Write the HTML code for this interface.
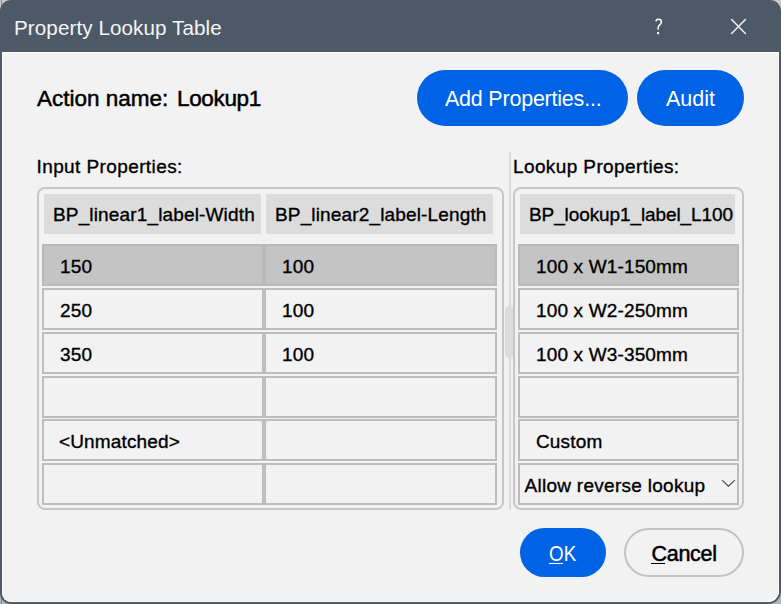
<!DOCTYPE html>
<html><head><meta charset="utf-8">
<style>
*{margin:0;padding:0;box-sizing:border-box}
html,body{width:781px;height:604px;overflow:hidden;background:linear-gradient(#cacaca,#b4b4b4);font-family:"Liberation Sans",sans-serif;color:#000}
.a{position:absolute;white-space:nowrap;line-height:1}
#win{position:absolute;left:0;top:0;width:781px;height:604px;background:#4e5968;border-radius:11px 11px 13px 11px;overflow:hidden}
#body{position:absolute;left:2px;top:52px;width:777px;height:550px;background:#f2f2f2;border-radius:0 0 11px 9px;box-shadow:inset 1px 1px 0 #fbfbfb,inset -1px -1px 0 #fbfbfb}
.t{font-size:19px;letter-spacing:0.15px;-webkit-text-stroke:0.35px #000}
.frame{position:absolute;border:2px solid #c6c6c6;border-radius:8px}
.hdr{position:absolute;background:#dcdcdc;height:40px}
.cell{position:absolute;height:42px;border:2px solid #bdbdbd;background:#f2f2f2}
.sel{background:#c4c4c4;border-color:#bababa}
.s{-webkit-text-stroke:0.5px #000}
.btn{position:absolute;background:#0063e5;border-radius:28px;color:#fff}
</style></head><body>
<div class="a" style="left:1px;top:0;width:1px;height:604px;background:#8a8a8a"></div>
<div id="win">
  <div class="a" style="left:14px;top:18px;font-size:20.6px;letter-spacing:0.1px;color:#f4f5f7">Property Lookup Table</div>
  <svg class="a" style="left:0;top:0" width="781" height="60"><path d="M655.6 21.3C656.2 19.9 657.3 19.3 658.5 19.3C660.2 19.3 661.4 20.4 661.4 21.9C661.4 23.6 660.2 24.4 659.2 25.4C658.4 26.2 658.1 26.9 658.1 28L658.1 29.8" stroke="#fff" stroke-width="1.5" fill="none"/><rect x="657.1" y="32" width="2" height="2.2" fill="#fff"/></svg>
  <svg class="a" style="left:730px;top:18px" width="17" height="17" viewBox="0 0 17 17"><path d="M1.6 1.6L15.4 15.4M15.4 1.6L1.6 15.4" stroke="#f6f6f6" stroke-width="1.4" stroke-linecap="round" fill="none"/></svg>
  <div id="body"></div>
</div>
<!-- content in page coords -->
<div class="a s" style="left:37px;top:88px;font-size:22.5px">Action name:</div>
<div class="a s" style="left:177px;top:88px;font-size:22.5px;letter-spacing:-0.35px">Lookup1</div>
<div class="btn" style="left:417px;top:69.5px;width:211px;height:56px"></div>
<div class="a" style="left:445px;top:89px;font-size:21.5px;letter-spacing:-0.22px;color:#fff">Add Properties...</div>
<div class="btn" style="left:637px;top:69.5px;width:107px;height:56px"></div>
<div class="a" style="left:666px;top:89px;font-size:21.5px;color:#fff">Audit</div>

<div class="a t" style="left:36.5px;top:156.5px;letter-spacing:0.4px">Input Properties:</div>
<div class="a t" style="left:513px;top:156.5px;letter-spacing:0.39px">Lookup Properties:</div>

<div class="a" style="left:509px;top:152px;width:2px;height:358px;background:#dadada"></div>
<div class="a" style="left:504.6px;top:305.8px;width:9.2px;height:52.2px;background:#dcdcdc;border-radius:5px"></div>

<div class="frame" style="left:37px;top:187px;width:467px;height:323px"></div>
<div class="frame" style="left:513px;top:187px;width:231px;height:323px"></div>

<div class="hdr" style="left:44px;top:194px;width:217px"></div>
<div class="hdr" style="left:266px;top:194px;width:227px"></div>
<div class="hdr" style="left:520px;top:194px;width:215px"></div>
<div class="a t" style="left:53px;top:205px">BP_linear1_label-Width</div>
<div class="a t" style="left:275px;top:205px">BP_linear2_label-Length</div>
<div class="a t" style="left:529px;top:205px;letter-spacing:-0.1px">BP_lookup1_label_L100</div>

<!-- rows -->
<div class="cell sel" style="left:42px;top:244px;width:222px"></div>
<div class="cell sel" style="left:264px;top:244px;width:233px"></div>
<div class="cell sel" style="left:518px;top:244px;width:221px"></div>

<div class="cell" style="left:42px;top:288px;width:222px"></div>
<div class="cell" style="left:264px;top:288px;width:233px"></div>
<div class="cell" style="left:518px;top:288px;width:221px"></div>

<div class="cell" style="left:42px;top:332px;width:222px"></div>
<div class="cell" style="left:264px;top:332px;width:233px"></div>
<div class="cell" style="left:518px;top:332px;width:221px"></div>

<div class="cell" style="left:42px;top:376px;width:222px"></div>
<div class="cell" style="left:264px;top:376px;width:233px"></div>
<div class="cell" style="left:518px;top:376px;width:221px"></div>

<div class="cell" style="left:42px;top:419px;width:222px"></div>
<div class="cell" style="left:264px;top:419px;width:233px"></div>
<div class="cell" style="left:518px;top:419px;width:221px"></div>

<div class="cell" style="left:42px;top:463px;width:222px"></div>
<div class="cell" style="left:264px;top:463px;width:233px"></div>
<div class="cell" style="left:518px;top:463px;width:221px"></div>

<div class="a t" style="left:60px;top:257px">150</div>
<div class="a t" style="left:282px;top:257px">100</div>
<div class="a t" style="left:536px;top:257px">100 x W1-150mm</div>
<div class="a t" style="left:60px;top:301px">250</div>
<div class="a t" style="left:282px;top:301px">100</div>
<div class="a t" style="left:536px;top:301px">100 x W2-250mm</div>
<div class="a t" style="left:60px;top:345px">350</div>
<div class="a t" style="left:282px;top:345px">100</div>
<div class="a t" style="left:536px;top:345px">100 x W3-350mm</div>
<div class="a t" style="left:59px;top:432px">&lt;Unmatched&gt;</div>
<div class="a t" style="left:536px;top:432px">Custom</div>
<div class="a t" style="left:524.5px;top:476px;letter-spacing:0.28px">Allow reverse lookup</div>
<svg class="a" style="left:721px;top:479px" width="16" height="10" viewBox="0 0 16 10"><path d="M1.4 1.4L7.4 7.3L13.6 1.4" stroke="#575757" stroke-width="1.25" stroke-linecap="round" stroke-linejoin="round" fill="none"/></svg>

<div class="btn" style="left:520px;top:527.8px;width:86px;height:49px;border-radius:24.5px"></div>
<div class="a" style="left:549px;top:544px;font-size:21.5px;color:#fff;transform:scaleX(0.875);transform-origin:0 0">OK</div>
<div class="a" style="left:549px;top:563px;width:14px;height:1px;background:#fff"></div>
<div class="a" style="left:624px;top:528px;width:120px;height:49px;border-radius:24.5px;border:2px solid #c2c2c2"></div>
<div class="a s" style="left:651.5px;top:544px;font-size:21.5px;letter-spacing:-0.3px">Cancel</div>
<div class="a" style="left:651px;top:563px;width:14px;height:1px;background:#000"></div>
</body></html>
